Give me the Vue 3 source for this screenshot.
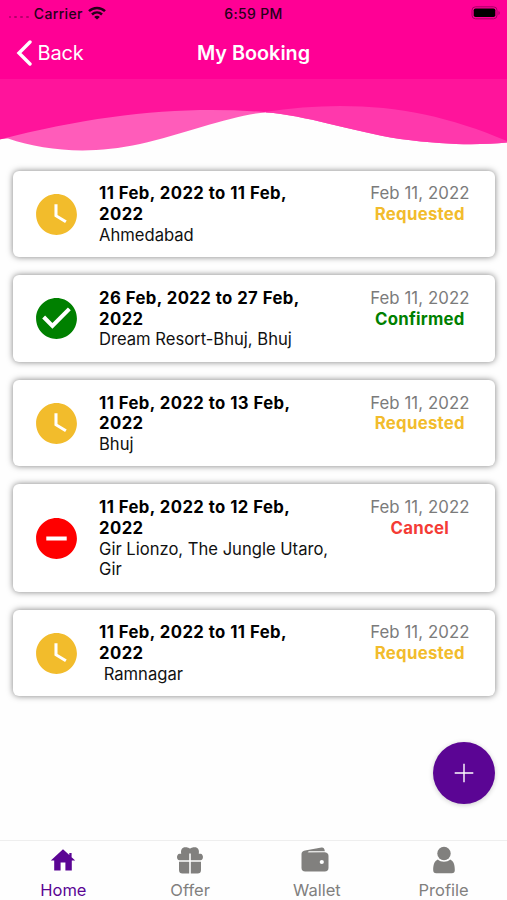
<script setup>
const bookings = [
  { range: '11 Feb, 2022 to 11 Feb, 2022', place: 'Ahmedabad', status: 'Requested', kind: 'requested' },
  { range: '26 Feb, 2022 to 27 Feb, 2022', place: 'Dream Resort-Bhuj, Bhuj', status: 'Confirmed', kind: 'confirmed' },
  { range: '11 Feb, 2022 to 13 Feb, 2022', place: 'Bhuj', status: 'Requested', kind: 'requested' },
  { range: '11 Feb, 2022 to 12 Feb, 2022', place: 'Gir Lionzo, The Jungle Utaro, Gir', status: 'Cancel', kind: 'cancel' },
  { range: '11 Feb, 2022 to 11 Feb, 2022', place: '\u00a0Ramnagar', status: 'Requested', kind: 'requested' },
]
const glyphs = {
  requested: 'M12 2C6.5 2 2 6.5 2 12s4.5 10 10 10 10-4.5 10-10S17.500 2 12 2zm4.200 14.200L11 13V7h1.500v5.200l4.500 2.700-.8 1.300z',
  confirmed: 'M12 2C6.480 2 2 6.480 2 12s4.480 10 10 10 10-4.480 10-10S17.520 2 12 2zm-2 15l-5-5 1.410-1.410L10 14.170l7.590-7.590L19 8l-9 9z',
  cancel: 'M12 2C6.480 2 2 6.480 2 12s4.480 10 10 10 10-4.480 10-10S17.520 2 12 2zm5 11H7v-2h10v2z',
}
</script>

<template>
  <div class="screen">
    <header class="top">
      <div class="status">
        <div class="carrier">
          <span class="dots"><i></i><i></i><i></i><i></i></span>
          <span>Carrier</span>
          <svg class="wifi" viewBox="0 0 18 14" width="18" height="14">
            <g fill="none" stroke="#26001a" stroke-width="2.500">
              <path d="M1 5.200C5.400 0.900 12.600 0.900 17 5.200" />
              <path d="M4 8.500C6.900 5.800 11.100 5.800 14 8.500" />
            </g>
            <path d="M9 13.600L6.200 10.900C7.800 9.500 10.200 9.500 11.800 10.900Z" fill="#26001a" />
          </svg>
        </div>
        <span class="clock">6:59 PM</span>
        <svg class="battery" viewBox="0 0 30 14" width="30" height="14">
          <rect x="1" y="0.800" width="25" height="12" rx="3.500" fill="none" stroke="#a60065" />
          <rect x="2.700" y="2.500" width="21.600" height="8.600" rx="1.800" fill="#000" />
          <path d="M27.500 5v4c1.700-.6 1.700-3.400 0-4z" fill="#a60065" />
        </svg>
      </div>
      <nav class="nav">
        <button class="back">
          <svg viewBox="0 0 16 26" width="16" height="26"><path d="M14 2L3 13L14 24" fill="none" stroke="#fff" stroke-width="3.400" stroke-linecap="round" stroke-linejoin="miter" /></svg>
          <span>Back</span>
        </button>
        <h1>My Booking</h1>
      </nav>
    </header>
    <svg class="waves" viewBox="0 79 507 75" width="507" height="75">
      <path d="M0 79H507V142.500C480 145 450 145.500 400 139C350 131 305 115 266 112.500C235 114 185 134 140 144C90 155 45 151 8 138.500L0 139Z" fill="#ff5cba" />
      <path d="M262 79H507V142.500C480 145 450 145.500 400 139C350 131 305 115 266 112.500Z" fill="#ff38ac" />
      <path d="M0 79H507V141C450 117 400 106 340 106C315 106 290 108 264 112C180 106 100 114 0 139.500Z" fill="#ff149b" />
    </svg>

    <main class="list">
      <article v-for="(b, i) in bookings" :key="i" class="card">
        <svg class="state" :class="b.kind" viewBox="0 0 24 24"><path :d="glyphs[b.kind]" fill="currentColor" /></svg>
        <div class="info">
          <strong>{{ b.range }}</strong>
          <span>{{ b.place }}</span>
        </div>
        <div class="meta">
          <time>Feb 11, 2022</time>
          <b :class="b.kind">{{ b.status }}</b>
        </div>
      </article>
    </main>

    <div class="action">
      <button class="fab">
        <svg viewBox="0 0 20 20" width="20" height="20"><path d="M10 .7V19.300M.7 10H19.300" stroke="#fff" stroke-width="1.400" /></svg>
      </button>
    </div>

    <footer class="tabs">
      <a class="tab active">
        <svg viewBox="0 0 28 28"><path d="M14 3.300L1.800 14.500H5.200V24.600H11.600V16.500H16.400V24.600H22.800V14.500H26.200L22.600 11.200V7H20.300V9.100Z" fill="currentColor" /></svg>
        <span>Home</span>
      </a>
      <a class="tab">
        <svg viewBox="0 0 28 28" fill="currentColor">
          <path d="M13.200 7.600V14.200H3.500C.2 14.200 .2 8 3.500 7.700H5.200C4.400 4 6.200 1.300 9.200 1.300C11.500 1.300 13 1.900 14 2.700C15 1.900 16.500 1.300 18.800 1.300C21.800 1.300 23.600 4 22.800 7.700H24.500C27.800 8 27.800 14.200 24.500 14.200H14.800V7.600Z" />
          <path d="M3 15.800H13.200V27.400H6.500Q3 27.400 3 23.900ZM14.800 15.800H25V23.900Q25 27.400 21.500 27.400H14.800Z" />
        </svg>
        <span>Offer</span>
      </a>
      <a class="tab">
        <svg class="wallet" viewBox="0 0 28 28" fill="currentColor">
          <path d="M4 4.500L20.500 1.600Q23.200 1.200 23.700 4.500V5.200H8.500L6.500 6.200H24Q27.500 6.800 27.500 10V21.700Q27.500 25.500 23.700 25.500H4.300Q.5 25.500 .5 21.700V8Q.5 5.100 4 4.500Z" />
          <path d="M7.500 5.300L23.700 4.900V6L7.500 6.300Z" fill="#e4e4e3" />
          <circle cx="20.800" cy="16" r="2.100" fill="#fff" />
        </svg>
        <span>Wallet</span>
      </a>
      <a class="tab">
        <svg viewBox="0 0 28 28" fill="currentColor">
          <circle cx="14" cy="7.500" r="6.700" />
          <path d="M7.800 13.400C11 16.400 17 16.400 20.200 13.400C23.500 14.800 24.900 18.500 24.800 24.300Q24.800 27.200 21.800 27.200H6.200Q3.200 27.200 3.200 24.300C3.100 18.500 4.500 14.800 7.800 13.400Z" />
        </svg>
        <span>Profile</span>
      </a>
    </footer>
  </div>
</template>

<style>
body { margin: 0; background: #fff; }
</style>

<style scoped>
.screen {
  width: 507px;
  height: 900px;
  display: flex;
  flex-direction: column;
  overflow: hidden;
  background: #fefefe;
  font-family: Inter, "Liberation Sans", sans-serif;
  color: #111;
}
button { border: 0; padding: 0; background: none; font: inherit; color: inherit; }
.top { flex: none; height: 79px; background: #ff0095; }
.status {
  height: 26px;
  display: grid;
  grid-template-columns: 1fr auto 1fr;
  align-items: center;
  font-size: 14px;
  letter-spacing: 0.350px;
  font-weight: 500;
  color: #26001a;
}
.carrier { display: flex; align-items: center; padding-left: 8.500px; }
.dots { display: flex; gap: 3.300px; margin: 8px 5px 0 0; }
.dots i { width: 2.600px; height: 2.600px; border-radius: 50%; background: #b5006b; }
.wifi { margin-left: 5px; }
.battery { justify-self: end; margin-right: 6px; }
.nav {
  height: 53px;
  display: grid;
  grid-template-columns: 1fr auto 1fr;
  align-items: center;
  color: #fff;
}
.back { display: flex; align-items: center; gap: 5.500px; padding-left: 16px; font-size: 20px; letter-spacing: -0.200px; }
h1 { margin: 0; font-size: 19.800px; font-weight: 600; }
.waves { flex: none; display: block; }
.list { display: flex; flex-direction: column; gap: 17.900px; padding: 16.500px 12.500px 0; }
.card {
  display: flex;
  box-sizing: border-box;
  padding: 12.900px 25px 11.700px 19px;
  border-radius: 6px;
  background: #fff;
  box-shadow: 0 0 6px rgba(0, 0, 0, 0.500);
  font-size: 16.600px;
  line-height: 20.700px;
}
.state { flex: none; align-self: center; width: 49px; height: 49px; margin: -0.600px 18.500px 0 0; }
.info { width: 240px; display: flex; flex-direction: column; }
.info strong { width: 215px; font-size: 16.700px; font-weight: 700; letter-spacing: 0.450px; color: #000; }
.meta { margin-left: auto; display: flex; flex-direction: column; align-items: center; }
.meta time { color: #7b7b7b; font-size: 16.800px; letter-spacing: 0.070px; }
.meta b { font-size: 16.800px; font-weight: 700; letter-spacing: 0.250px; }
.requested { color: #f2bc2c; }
.confirmed { color: #008000; }
.cancel { color: #ff0000; }
b.cancel { color: #f43b36; }
.action { display: flex; justify-content: flex-end; padding: 46px 12px 0; }
.fab {
  width: 62px;
  height: 62px;
  border-radius: 50%;
  background: #5b0594;
  display: grid;
  place-items: center;
  box-shadow: 0 1px 5px rgba(0, 0, 0, 0.200);
}
.tabs {
  flex: none;
  box-sizing: border-box;
  height: 60px;
  margin-top: auto;
  border-top: 1px solid #eee;
  display: grid;
  grid-template-columns: repeat(4, 1fr);
}
.tab { display: flex; flex-direction: column; align-items: center; color: #81807e; font-size: 16.500px; line-height: 20px; }
.tab svg { width: 28px; height: 28px; margin: 5px 0 5.500px; }
.tab .wallet { margin-right: 4px; }
.tab.active { color: #5b0594; }
</style>
